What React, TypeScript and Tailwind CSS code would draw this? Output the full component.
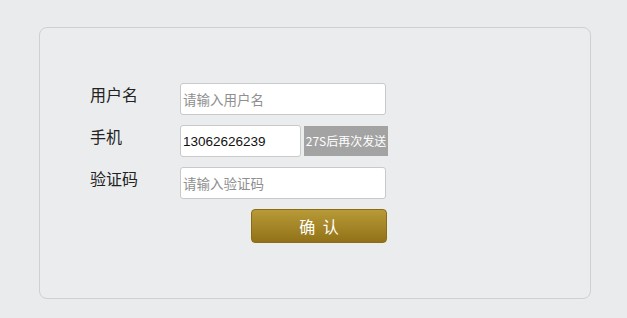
const cjk = '"Noto Sans CJK SC", "Microsoft YaHei", sans-serif';
const latin = '"Liberation Sans", "Noto Sans CJK SC", sans-serif';

type FieldRowProps = {
  label: string;
  children: React.ReactNode;
};

const FieldRow = ({ label, children }: FieldRowProps) => (
  <div className="flex items-start">
    <span className="w-[90px] text-[16px] leading-[22px] text-[#222]" style={{ fontFamily: cjk }}>
      {label}
    </span>
    <div className="flex items-center gap-[3px]">{children}</div>
  </div>
);

const inputClass =
  "h-[32px] rounded-[3px] border border-[#c9c9c9] bg-white px-[2px] text-[#111] outline-none placeholder:text-[#8f8f8f]";

export default function App() {
  return (
    <div className="min-h-[318px] bg-[#eaebed] pl-[39px] pt-[27px]">
      <div className="h-[272px] w-[552px] rounded-[8px] border border-[#cfd0d2] bg-[#ebecee] pl-[50px] pt-[55px]">
        <div className="flex flex-col gap-[10px]">
          <FieldRow label="用户名">
            <input
              className={`${inputClass} w-[206px] text-[13.5px]`}
              style={{ fontFamily: cjk }}
              placeholder="请输入用户名"
            />
          </FieldRow>
          <FieldRow label="手机">
            <input
              className={`${inputClass} w-[121px] text-[13.5px]`}
              style={{ fontFamily: latin }}
              defaultValue="13062626239"
            />
            <button
              className="h-[30px] w-[84px] bg-[#a3a3a3] text-[12px] whitespace-nowrap text-white"
              style={{ fontFamily: cjk }}
            >
              27S后再次发送
            </button>
          </FieldRow>
          <FieldRow label="验证码">
            <input
              className={`${inputClass} w-[206px] text-[13.5px]`}
              style={{ fontFamily: cjk }}
              placeholder="请输入验证码"
            />
          </FieldRow>
          <div className="pl-[161px]">
            <button
              className="h-[34px] w-[136px] rounded-[4px] border border-[#8a6c14] bg-gradient-to-b from-[#b89a38] to-[#927216] pl-[2px] text-[16px] tracking-[2px] text-white"
              style={{ fontFamily: cjk }}
            >
              确&nbsp;认
            </button>
          </div>
        </div>
      </div>
    </div>
  );
}
